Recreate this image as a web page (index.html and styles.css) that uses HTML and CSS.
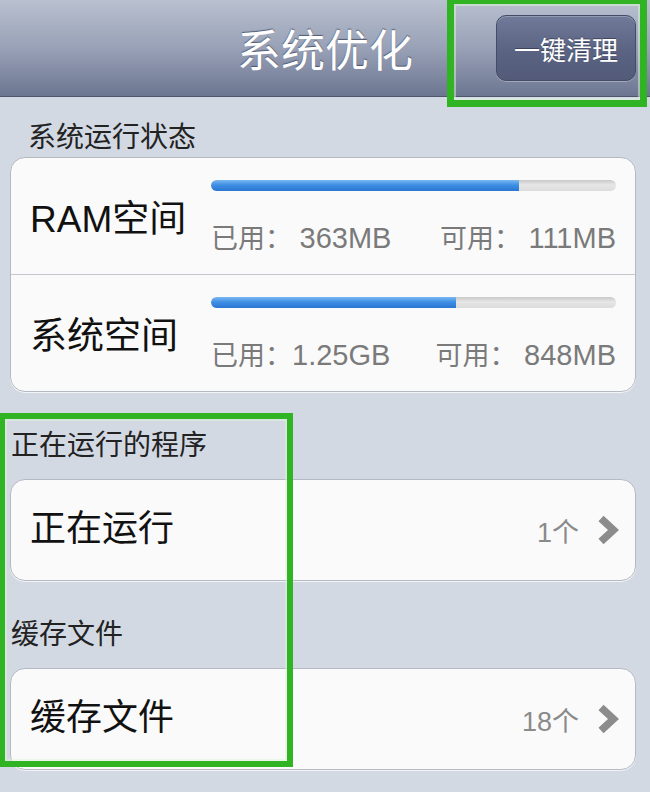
FILE: index.html
```html
<!DOCTYPE html>
<html lang="zh-CN">
<head>
<meta charset="utf-8">
<title>系统优化</title>
<link rel="stylesheet" href="styles.css">
</head>
<body>
<header class="navbar">
  <div class="nav-spacer"></div>
  <h1 class="nav-title">系统优化</h1>
  <div class="nav-right"><button class="nav-button">一键清理</button></div>
</header>

<main class="content">
  <div class="section-title first">系统运行状态</div>
  <div class="card">
    <div class="stat-row">
      <div class="stat-label">RAM空间</div>
      <div class="stat-body">
        <div class="bar"><div class="bar-fill" style="width: 76%"></div></div>
        <div class="stat-text"><span>已用： <span class="num">363MB</span></span><span>可用： <span class="num">111MB</span></span></div>
      </div>
    </div>
    <div class="divider"></div>
    <div class="stat-row">
      <div class="stat-label">系统空间</div>
      <div class="stat-body">
        <div class="bar"><div class="bar-fill" style="width: 60.5%"></div></div>
        <div class="stat-text"><span>已用：<span class="num">1.25GB</span></span><span>可用： <span class="num">848MB</span></span></div>
      </div>
    </div>
  </div>

  <div class="section-title">正在运行的程序</div>
  <div class="card link-row">
    <div class="link-label">正在运行</div>
    <div class="link-count">1个</div>
    <svg class="chevron" width="22" height="30" viewBox="0 0 22 30"><polyline points="4,3.5 16.5,15 4,26.5" fill="none" stroke="#8c8c8c" stroke-width="7.5"/></svg>
  </div>

  <div class="section-title">缓存文件</div>
  <div class="card link-row">
    <div class="link-label">缓存文件</div>
    <div class="link-count">18个</div>
    <svg class="chevron" width="22" height="30" viewBox="0 0 22 30"><polyline points="4,3.5 16.5,15 4,26.5" fill="none" stroke="#8c8c8c" stroke-width="7.5"/></svg>
  </div>
</main>

<div class="highlight hl-button"></div>
<div class="highlight hl-list"></div>
</body>
</html>
```

FILE: styles.css
```css
html, body {
  margin: 0;
  padding: 0;
}
body {
  width: 650px;
  height: 792px;
  overflow: hidden;
  background: #d3d9e2;
  font-family: "Liberation Sans", "Noto Sans CJK SC", sans-serif;
  position: relative;
}

.navbar {
  height: 96px;
  border-bottom: 1px solid #4f566e;
  background: linear-gradient(to bottom, #b9c1d0 0%, #98a1b6 50%, #6d7691 100%);
  display: grid;
  grid-template-columns: 1fr auto 1fr;
  align-items: center;
}
.nav-title {
  margin: 0;
  font-weight: normal;
  font-size: 44px;
  color: #ffffff;
  text-shadow: 0 -1px 1px rgba(50, 58, 80, 0.7);
}
.nav-right {
  display: flex;
  justify-content: flex-end;
  padding-right: 14px;
}
.nav-button {
  width: 140px;
  height: 66px;
  border-radius: 10px;
  border: 1px solid #444c68;
  background: linear-gradient(to bottom, #717a98 0%, #5a6382 55%, #535b79 100%);
  box-shadow: inset 0 1px 0 rgba(255,255,255,0.25), 0 1px 0 rgba(255,255,255,0.3);
  color: #ffffff;
  font-family: "Noto Sans CJK SC", sans-serif;
  font-size: 26px;
  padding: 0;
  text-shadow: 0 -1px 0 rgba(40, 45, 65, 0.6);
}

.content {
  padding: 0 14px 0 10px;
}
.section-title {
  font-family: "Noto Sans CJK SC", sans-serif;
  font-size: 28px;
  line-height: 36px;
  color: #222;
  padding-left: 1px;
  margin: 33px 0 18px;
}
.section-title.first {
  padding-left: 18px;
  margin: 20px 0 4px;
}

.card {
  background: #fafafa;
  border: 1px solid #b4b9c3;
  border-radius: 15px;
  box-shadow: 0 1px 0 rgba(255,255,255,0.7);
}

.stat-row {
  height: 116px;
  display: flex;
}
.stat-label {
  width: 180px;
  padding-left: 19px;
  font-size: 37px;
  color: #111;
  align-self: center;
  margin-top: 8px;
  line-height: 40px;
  white-space: nowrap;
}
.stat-body {
  flex: 1;
  padding: 22px 19px 0 1px;
}
.divider {
  height: 1px;
  background: #c4c7cd;
}
.bar {
  height: 11px;
  border-radius: 6px;
  background: linear-gradient(to bottom, #c9c9c9 0%, #e6e6e6 45%, #dcdcdc 100%);
  overflow: hidden;
}
.bar-fill {
  height: 100%;
  border-radius: 6px 0 0 6px;
  background: linear-gradient(to bottom, #7ab8f3 0%, #3f8fe3 45%, #2a76d3 100%);
}
.stat-text {
  display: flex;
  justify-content: space-between;
  margin-top: 29px;
  font-size: 27px;
  line-height: 36px;
  color: #7a7a7a;
}
.num {
  font-size: 29px;
}

.link-row {
  height: 100px;
  display: flex;
  align-items: center;
  padding: 0 16px 0 19px;
}
.link-label {
  flex: 1;
  font-size: 36px;
  line-height: 40px;
  margin-top: -3px;
  color: #111;
}
.link-count {
  font-size: 27px;
  color: #8a8a8a;
  margin-right: 18px;
}
.chevron {
  display: block;
}

.highlight {
  position: absolute;
  border: 6px solid #30b424;
  box-shadow: inset 0 0 0 2px rgba(220, 245, 215, 0.5);
  pointer-events: none;
}
.hl-button {
  left: 447px;
  top: -3px;
  width: 186px;
  height: 96px;
  border-width: 7px;
}
.hl-list {
  left: -1px;
  top: 413px;
  width: 282px;
  height: 342px;
}
```
